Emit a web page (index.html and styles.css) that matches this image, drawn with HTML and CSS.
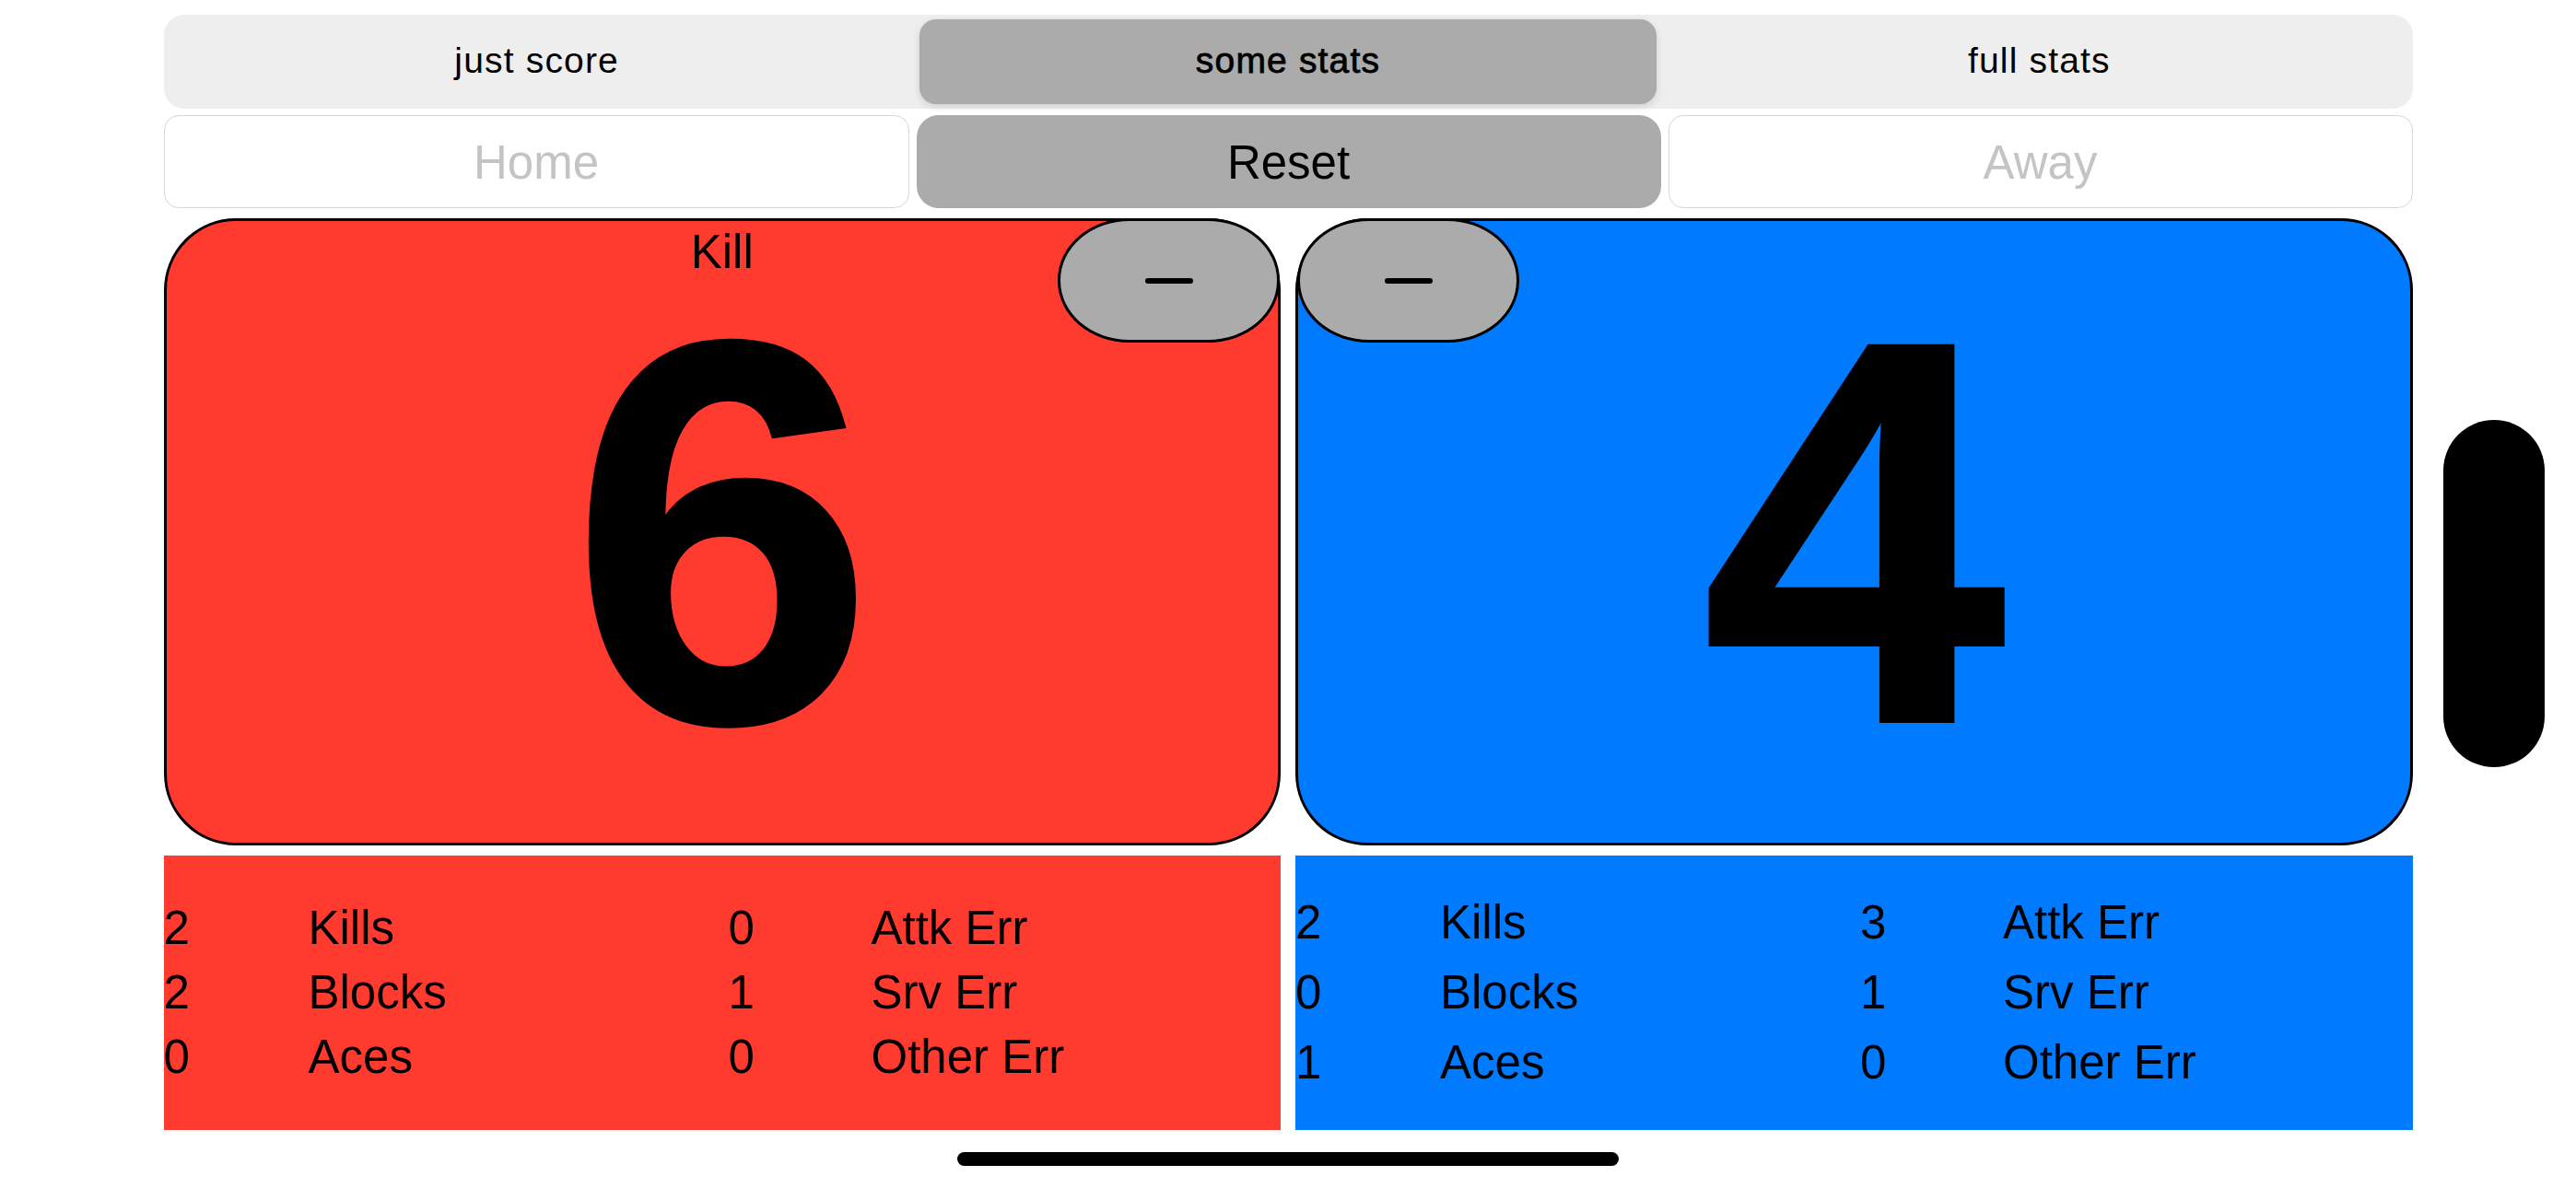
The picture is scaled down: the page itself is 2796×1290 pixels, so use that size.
FILE: index.html
```html
<!DOCTYPE html>
<html lang="en">
<head>
<meta charset="utf-8">
<title>Scoreboard</title>
<link rel="stylesheet" href="styles.css">
</head>
<body>
<div class="page">
  <div class="segmented">
    <div class="seg">just score</div>
    <div class="seg selected">some stats</div>
    <div class="seg">full stats</div>
  </div>

  <div class="names">
    <div class="field">Home</div>
    <div class="reset">Reset</div>
    <div class="field">Away</div>
  </div>

  <div class="scores">
    <div class="card home">
      <div class="card-label">Kill</div>
      <div class="score">6</div>
      <div class="minus minus-right"><span class="dash"></span></div>
    </div>
    <div class="card away">
      <div class="score">4</div>
      <div class="minus minus-left"><span class="dash"></span></div>
    </div>
  </div>

  <div class="stats-row">
    <div class="stats home">
      <span>2</span><span>Kills</span><span>0</span><span>Attk Err</span>
      <span>2</span><span>Blocks</span><span>1</span><span>Srv Err</span>
      <span>0</span><span>Aces</span><span>0</span><span>Other Err</span>
    </div>
    <div class="stats away">
      <span>2</span><span>Kills</span><span>3</span><span>Attk Err</span>
      <span>0</span><span>Blocks</span><span>1</span><span>Srv Err</span>
      <span>1</span><span>Aces</span><span>0</span><span>Other Err</span>
    </div>
  </div>

  <div class="home-indicator"></div>
</div>
<div class="side-pill"></div>
</body>
</html>
```

FILE: styles.css
```css
* { box-sizing: border-box; }

html, body {
  margin: 0;
  padding: 0;
  background: #ffffff;
}

body {
  width: 2796px;
  height: 1290px;
  overflow: hidden;
  position: relative;
  font-family: "Liberation Sans", Arial, sans-serif;
  color: #000;
}

.page {
  width: 2441px;
  margin: 0 auto;
  padding-top: 16px;
  display: flex;
  flex-direction: column;
}

/* segmented control */
.segmented {
  height: 102px;
  background: #eeeeef;
  border-radius: 22px;
  padding: 5px;
  display: grid;
  grid-template-columns: 1fr 1fr 1fr;
  gap: 15px;
}

.seg {
  display: flex;
  align-items: center;
  justify-content: center;
  font-size: 39px;
  letter-spacing: 0.03em;
  border-radius: 18px;
  padding-bottom: 2px;
}

.seg.selected {
  background: #ababab;
  -webkit-text-stroke: 0.8px #000;
  box-shadow: 0 3px 9px rgba(0, 0, 0, 0.12), 0 0 0 0.5px rgba(0, 0, 0, 0.04);
}

/* name row */
.names {
  margin-top: 7px;
  height: 101px;
  display: grid;
  grid-template-columns: 809px 808px 1fr;
  column-gap: 8px;
}

.field {
  border: 1.5px solid #d6d6d6;
  border-radius: 16px;
  display: flex;
  align-items: center;
  justify-content: center;
  font-size: 51px;
  color: #c4c4c6;
  padding-top: 2px;
}

.reset {
  background: #ababab;
  border-radius: 24px;
  display: flex;
  align-items: center;
  justify-content: center;
  font-size: 51px;
  padding-top: 2px;
}

/* score cards */
.scores {
  margin-top: 11px;
  height: 681px;
  display: grid;
  grid-template-columns: 1fr 1fr;
  column-gap: 16px;
}

.card {
  position: relative;
  border: 3px solid #000;
  border-radius: 78px;
  display: grid;
  grid-template-areas: "stack";
  justify-items: center;
}

.card.home { background: #ff3b30; }
.card.away { background: #007aff; }

.card-label {
  grid-area: stack;
  align-self: start;
  margin-top: 3px;
  font-size: 51px;
  line-height: 61px;
}

.score {
  grid-area: stack;
  align-self: center;
  font-family: "Liberation Sans", Arial, sans-serif;
  font-weight: 700;
  font-size: 592px;
  line-height: 440px;
  -webkit-text-stroke: 4px #000;
}

.minus {
  position: absolute;
  top: -3px;
  width: 241px;
  height: 135px;
  background: #ababab;
  border: 3px solid #000;
  border-radius: 78px / 67px;
  display: flex;
  align-items: center;
  justify-content: center;
}

.minus-right { right: -2px; }
.minus-left { left: -1px; }

.dash {
  display: block;
  width: 52px;
  height: 6px;
  border-radius: 3px;
  background: #000;
}

/* stats */
.stats-row {
  margin-top: 11px;
  height: 298px;
  display: grid;
  grid-template-columns: 1fr 1fr;
  column-gap: 16px;
}

.stats {
  display: grid;
  grid-template-columns: 157px 456px 155px 1fr;
  grid-auto-rows: 70px;
  align-content: center;
  font-size: 51px;
  line-height: 70px;
  white-space: nowrap;
}

.stats.home { background: #ff3b30; }
.stats.away {
  background: #007aff;
  grid-auto-rows: 76px;
  line-height: 76px;
}

.stats span { display: block; }

/* home indicator */
.home-indicator {
  margin: 24px auto 0;
  width: 718px;
  height: 15px;
  border-radius: 8px;
  background: #000;
}

/* side pill overlay */
.side-pill {
  position: absolute;
  left: 2652px;
  top: 456px;
  width: 110px;
  height: 377px;
  border-radius: 55px;
  background: #000;
}
```
